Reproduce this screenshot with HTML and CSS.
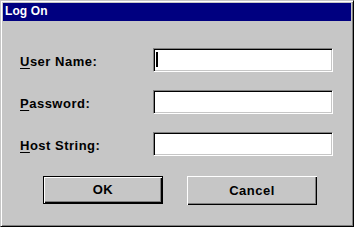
FILE: index.html
```html
<!DOCTYPE html>
<html>
<head>
<meta charset="utf-8">
<title>Log On</title>
<link rel="stylesheet" href="styles.css">
</head>
<body>
<div class="window">
  <div class="titlebar">Log On</div>
  <div class="content">
    <div class="form">
      <div class="label"><span class="acc">U</span>ser Name:</div>
      <div class="field"><span class="caret"></span></div>
      <div class="label"><span class="acc">P</span>assword:</div>
      <div class="field"></div>
      <div class="label"><span class="acc">H</span>ost String:</div>
      <div class="field"></div>
    </div>
    <div class="buttons">
      <div class="btn btn-default">OK</div>
      <div class="btn btn-cancel">Cancel</div>
    </div>
  </div>
</div>
</body>
</html>
```

FILE: styles.css
```css
html, body {
  margin: 0;
  padding: 0;
  background: #c6c6c6;
}

.window {
  width: 354px;
  height: 227px;
  box-sizing: border-box;
  border: 1px solid;
  border-color: #c6c6c6 #000 #000 #c6c6c6;
  box-shadow: inset 1px 1px #fff, inset -1px -1px #808080;
  padding: 2px;
  background: #c6c6c6;
  display: flex;
  flex-direction: column;
  font-family: "Liberation Sans", Arial, sans-serif;
  font-weight: bold;
  color: #000;
}

.titlebar {
  height: 18px;
  line-height: 16px;
  background: #000080;
  color: #fff;
  font-size: 12px;
  padding-left: 2px;
  letter-spacing: 0.1px;
}

.content {
  padding: 27px 0 0 17px;
  display: flex;
  flex-direction: column;
}

.form {
  display: grid;
  grid-template-columns: 133px 180px;
  grid-auto-rows: 24px;
  row-gap: 18px;
}

.label {
  font-size: 13px;
  line-height: 24px;
  padding-top: 2px;
  letter-spacing: 0.5px;
}

.acc {
  text-decoration: underline;
  text-decoration-thickness: 1px;
  text-underline-offset: 2px;
}

.field {
  box-sizing: border-box;
  height: 24px;
  background: #fff;
  border: 1px solid;
  border-color: #808080 #fff #fff #808080;
  box-shadow: inset 1px 1px #000, inset -1px -1px #c6c6c6;
  padding: 3px 0 0 2px;
}

.caret {
  display: block;
  width: 2px;
  height: 15px;
  background: #000;
}

.buttons {
  display: flex;
  gap: 24px;
  margin-top: 20px;
  padding-left: 23px;
  align-items: flex-start;
}

.btn {
  box-sizing: border-box;
  display: flex;
  align-items: center;
  justify-content: center;
  font-size: 13px;
  letter-spacing: 0.5px;
}

.btn-default {
  width: 120px;
  height: 28px;
  border: 1px solid #000;
  box-shadow: inset 1px 1px #fff, inset -1px -1px #000, inset -2px -2px #808080;
  padding-bottom: 2px;
}

.btn-cancel {
  width: 130px;
  height: 29px;
  box-shadow: inset 1px 1px #fff, inset -1px -1px #000, inset -2px -2px #808080;
  padding-bottom: 1px;
}
```
